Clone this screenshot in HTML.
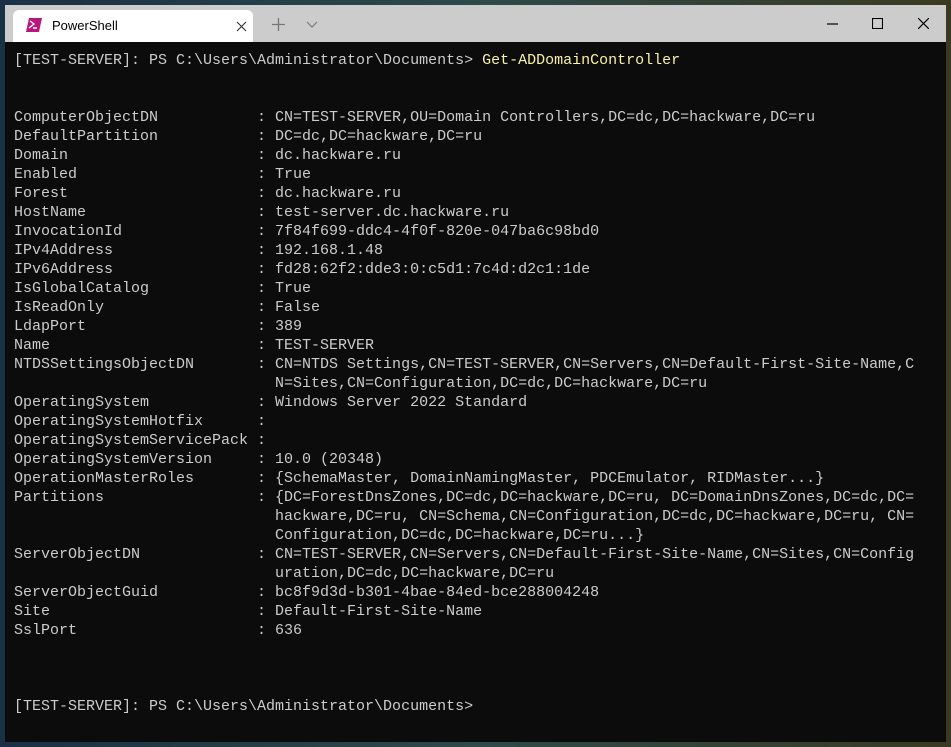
<!DOCTYPE html>
<html><head><meta charset="utf-8"><style>
html,body{margin:0;padding:0;width:951px;height:747px;overflow:hidden;background:linear-gradient(90deg,#1a3045,#2d4a4a 50%,#3a3a20);}
.win{position:absolute;left:5px;top:5px;width:941px;height:737px;background:#0c0c0c;}
.tb{position:absolute;left:0;top:0;width:941px;height:37px;background:#cccccc;}
.tab{position:absolute;left:8px;top:5px;width:240px;height:32px;background:#fff;border-radius:6px 6px 0 0;}
.tab .t{position:absolute;left:39px;top:8px;font:13px "Liberation Sans",sans-serif;color:#000;}
pre{position:absolute;left:9px;top:46px;margin:0;font:15px/19px "Liberation Mono",monospace;color:#cccccc;}
.y{color:#f9f1a5}
</style></head><body>
<div class="win">
<div class="tb">
<div class="tab">
<svg style="position:absolute;left:13px;top:8px" width="16" height="14" viewBox="0 0 16 14"><path d="M3 0H16L13 14H0Z" fill="#b8187c"/><path d="M4 3L8 6L3 10" stroke="#fff" stroke-width="1.4" fill="none"/><path d="M7 10H11" stroke="#fff" stroke-width="1.4"/></svg>
<span class="t">PowerShell</span>
<svg style="position:absolute;left:223px;top:11px" width="11" height="11"><path d="M1 1L10 10M10 1L1 10" stroke="#333" stroke-width="1.1"/></svg>
</div>
<svg style="position:absolute;left:267px;top:13px" width="13" height="13"><path d="M6.5 0V13M0 6.5H13" stroke="#777" stroke-width="1.3"/></svg>
<svg style="position:absolute;left:301px;top:16px" width="12" height="7"><path d="M1 1L6 6L11 1" stroke="#777" stroke-width="1.2" fill="none"/></svg>
<svg style="position:absolute;left:822px;top:18px" width="11" height="2"><path d="M0 1H11" stroke="#000" stroke-width="1.2"/></svg>
<svg style="position:absolute;left:867px;top:13px" width="11" height="11"><rect x="0.5" y="0.5" width="10" height="10" fill="none" stroke="#000" stroke-width="1.1"/></svg>
<svg style="position:absolute;left:913px;top:13px" width="11" height="11"><path d="M0 0L11 11M11 0L0 11" stroke="#000" stroke-width="1.2"/></svg>
</div>
<pre>[TEST-SERVER]: PS C:\Users\Administrator\Documents> <span class="y">Get-ADDomainController</span>


ComputerObjectDN           : CN=TEST-SERVER,OU=Domain Controllers,DC=dc,DC=hackware,DC=ru
DefaultPartition           : DC=dc,DC=hackware,DC=ru
Domain                     : dc.hackware.ru
Enabled                    : True
Forest                     : dc.hackware.ru
HostName                   : test-server.dc.hackware.ru
InvocationId               : 7f84f699-ddc4-4f0f-820e-047ba6c98bd0
IPv4Address                : 192.168.1.48
IPv6Address                : fd28:62f2:dde3:0:c5d1:7c4d:d2c1:1de
IsGlobalCatalog            : True
IsReadOnly                 : False
LdapPort                   : 389
Name                       : TEST-SERVER
NTDSSettingsObjectDN       : CN=NTDS Settings,CN=TEST-SERVER,CN=Servers,CN=Default-First-Site-Name,C
                             N=Sites,CN=Configuration,DC=dc,DC=hackware,DC=ru
OperatingSystem            : Windows Server 2022 Standard
OperatingSystemHotfix      :
OperatingSystemServicePack :
OperatingSystemVersion     : 10.0 (20348)
OperationMasterRoles       : {SchemaMaster, DomainNamingMaster, PDCEmulator, RIDMaster...}
Partitions                 : {DC=ForestDnsZones,DC=dc,DC=hackware,DC=ru, DC=DomainDnsZones,DC=dc,DC=
                             hackware,DC=ru, CN=Schema,CN=Configuration,DC=dc,DC=hackware,DC=ru, CN=
                             Configuration,DC=dc,DC=hackware,DC=ru...}
ServerObjectDN             : CN=TEST-SERVER,CN=Servers,CN=Default-First-Site-Name,CN=Sites,CN=Config
                             uration,DC=dc,DC=hackware,DC=ru
ServerObjectGuid           : bc8f9d3d-b301-4bae-84ed-bce288004248
Site                       : Default-First-Site-Name
SslPort                    : 636



[TEST-SERVER]: PS C:\Users\Administrator\Documents></pre>
</div>
</body></html>
